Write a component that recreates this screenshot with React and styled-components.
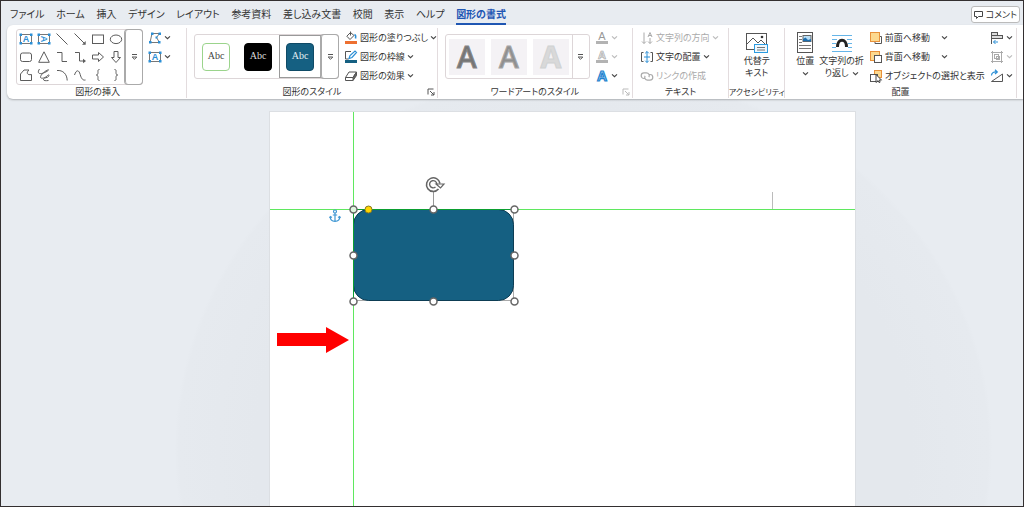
import styled, { createGlobalStyle } from "styled-components";

const tabs = [
  "ファイル",
  "ホーム",
  "挿入",
  "デザイン",
  "レイアウト",
  "参考資料",
  "差し込み文書",
  "校閲",
  "表示",
  "ヘルプ",
  "図形の書式",
];
const activeTab = "図形の書式";

const TextBoxIcon = ({ vertical }) => (
  <svg width="14" height="14" viewBox="0 0 14 14" fill="none">
    <rect x="1.5" y="2.5" width="11" height="9" stroke="#777" />
    <g fill="#2b8fd6">
      <rect x="0.500" y="1.500" width="2.500" height="2.500" />
      <rect x="11" y="1.500" width="2.500" height="2.500" />
      <rect x="0.500" y="10" width="2.500" height="2.500" />
      <rect x="11" y="10" width="2.500" height="2.500" />
    </g>
    <text
      x="7"
      y="10"
      textAnchor="middle"
      fontFamily="Liberation Sans, sans-serif"
      fontSize="9"
      fontWeight="700"
      fill="#2b8fd6"
      transform={vertical ? "rotate(90 7 7)" : undefined}
    >
      A
    </text>
  </svg>
);

const ShapeIcon = ({ children }) => (
  <svg width="14" height="14" viewBox="0 0 14 14" fill="none" stroke="#5c5c5c">
    {children}
  </svg>
);

const shapes = [
  { name: "テキスト ボックス", icon: <TextBoxIcon /> },
  { name: "縦書きテキスト ボックス", icon: <TextBoxIcon vertical /> },
  { name: "線", icon: <ShapeIcon><path d="M1.5 1.5 12.5 12.5" /></ShapeIcon> },
  {
    name: "線矢印",
    icon: (
      <ShapeIcon>
        <path d="M1.5 1.5 12 12" />
        <path d="M12.7 9v3.7H9z" fill="#5c5c5c" stroke="none" />
      </ShapeIcon>
    ),
  },
  { name: "正方形/長方形", icon: <ShapeIcon><rect x="1.5" y="3" width="11" height="8.5" /></ShapeIcon> },
  { name: "楕円", icon: <ShapeIcon><ellipse cx="7" cy="7.3" rx="5.7" ry="4.3" /></ShapeIcon> },
  { name: "四角形: 角を丸くする", icon: <ShapeIcon><rect x="1.5" y="3" width="11" height="8.5" rx="2" /></ShapeIcon> },
  { name: "二等辺三角形", icon: <ShapeIcon><path d="M7 1.8 12.3 12.3H1.7z" /></ShapeIcon> },
  { name: "コネクタ: カギ線", icon: <ShapeIcon><path d="M2 2.5h5v9h5" /></ShapeIcon> },
  {
    name: "コネクタ: カギ線矢印",
    icon: (
      <ShapeIcon>
        <path d="M2 2.5h4.5v8.5H11" />
        <path d="M10 8.7 13 11l-3 2.3z" fill="#5c5c5c" stroke="none" />
      </ShapeIcon>
    ),
  },
  { name: "矢印: 右", icon: <ShapeIcon><path d="M1.5 5h6V2.5L12.5 7l-5 4.5V9h-6z" /></ShapeIcon> },
  { name: "矢印: 下", icon: <ShapeIcon><path d="M5 1.5v6H2.5L7 12.5l4.5-5H9v-6z" /></ShapeIcon> },
  {
    name: "フリーフォーム: 図形",
    icon: <ShapeIcon><path d="M5 2h5C7 4.500 8 7.500 12.500 6.500v6h-11V6z" /></ShapeIcon>,
  },
  {
    name: "フリーフォーム: フリーハンド",
    icon: (
      <ShapeIcon>
        <path d="M2.500 1C.5 4 1 6 4.500 5.500M4.500 5.500C7 5 11.500 3 11.500 1.800 9 2 3 7 3.500 9.500c1 1.500 4.500.5 6.500-1.500s2.500-1 1.500.5-4.500 1-5 2.500 1.500 2 5 1.500" />
      </ShapeIcon>
    ),
  },
  { name: "円弧", icon: <ShapeIcon><path d="M2 2.500C8 2 12 6 12.200 12.500" /></ShapeIcon> },
  { name: "曲線", icon: <ShapeIcon><path d="M1.500 7C3.500 1 6 2 7.200 6.500s2.800 6 5.300 5.500" /></ShapeIcon> },
  { name: "左中かっこ", icon: <ShapeIcon><path d="M8.500 1.500C6.500 1.500 7 3 7 4.500S6.500 7 5.300 7C6.500 7 7 8 7 9.500s-.5 3 1.500 3" /></ShapeIcon> },
  { name: "右中かっこ", icon: <ShapeIcon><path d="M5.500 1.500C7.500 1.500 7 3 7 4.500S7.500 7 8.700 7C7.500 7 7 8 7 9.500s.5 3-1.500 3" /></ShapeIcon> },
];

const shapeStyles = [
  { name: "枠線のみ", fill: "#fff", line: "#9bd48c", ink: "#444" },
  { name: "塗りつぶし - 黒", fill: "#000", line: "#000", ink: "#ddd" },
  { name: "塗りつぶし - 青緑", fill: "#156082", line: "#0f4a66", ink: "#e4eef3", selected: true },
];

const wordArtStyles = [
  { name: "塗りつぶし - 濃い灰色", ink: "#757575", edge: "#858585" },
  { name: "塗りつぶし - 灰色", ink: "#8f8f8f", edge: "#a5a5a5" },
  { name: "塗りつぶし - 薄い灰色", ink: "#d9d9d9", edge: "#d0d2d3", weight: 700 },
];

const Chevron = ({ muted }) => (
  <svg width="7" height="7" viewBox="0 0 7 7" fill="none" stroke={muted ? "#bbb" : "#444"} strokeWidth="1.1">
    <path d="M1 2.300 3.500 4.700 6 2.300" />
  </svg>
);

const MoreIcon = () => (
  <svg width="7" height="8" viewBox="0 0 7 8" fill="none" stroke="#555">
    <path d="M1 1.500h5M1.200 4 3.500 6.300 5.800 4z" />
  </svg>
);

const LauncherIcon = ({ muted }) => (
  <svg width="8" height="8" viewBox="0 0 8 8" fill="none" stroke={muted ? "#bbb" : "#555"}>
    <path d="M1 6.500V1h5.500M3 3l4 4M7 4v3H4" />
  </svg>
);

const EditShapeIcon = () => (
  <svg width="14" height="14" viewBox="0 0 14 14" fill="none">
    <path d="M4 2.500h7.500L8.500 6.500 11.500 11.500H2z" stroke="#777" />
    <g fill="#2b8fd6">
      <rect x="3" y="1.500" width="2.500" height="2.500" />
      <rect x="10.500" y="1.500" width="2.500" height="2.500" />
      <rect x="7.500" y="5.500" width="2" height="2" />
      <rect x="1" y="10" width="2.500" height="2.500" />
      <rect x="10" y="10" width="2.500" height="2.500" />
    </g>
  </svg>
);

const FillIcon = () => (
  <svg width="14" height="14" viewBox="0 0 14 14" fill="none">
    <path d="M6.500 1.500 2.800 5.200 6 8.500l4-4zM6.500.5v4" stroke="#555" />
    <path d="M10.500 3.500c1.200.5 1.500 2 1 4" stroke="#2b8fd6" strokeWidth="1.500" />
    <rect x="1" y="10" width="12" height="3" fill="#ed7031" />
  </svg>
);

const OutlineIcon = () => (
  <svg width="14" height="14" viewBox="0 0 14 14" fill="none">
    <path d="M7 1.500H1.500v7.500h3" stroke="#555" />
    <path d="M5 8.500 6 5.500l5-4.500 1.500 1.500L8 7.500z" stroke="#2b8fd6" strokeWidth="1.200" />
    <rect x="1" y="10" width="12" height="3" fill="#156082" />
  </svg>
);

const EffectIcon = () => (
  <svg width="14" height="14" viewBox="0 0 14 14" fill="none">
    <path d="M1.500 8.500 5 3h7.500L9 8.500zM1.500 8.500v3H9" stroke="#555" strokeLinejoin="round" />
    <path d="M9 8.500 12.500 3v3.500L9 11.500z" fill="#666" stroke="#555" strokeLinejoin="round" />
  </svg>
);

const LetterIcon = ({ tone }) => {
  const blue = tone === "effect";
  return (
    <svg width="14" height="14" viewBox="0 0 14 14">
      <text
        x="7"
        y={blue ? 12 : 9}
        textAnchor="middle"
        fontFamily="Liberation Sans, sans-serif"
        fontSize={blue ? 14 : 11}
        fontWeight={tone === "fill" ? 400 : 700}
        fill={blue ? "#a9d4f2" : tone === "fill" ? "#999" : "#eee"}
        stroke={blue ? "#1f83cf" : tone === "fill" ? "none" : "#aaa"}
        strokeWidth={blue ? 1.2 : 0.7}
      >
        A
      </text>
      {!blue && <rect x="1" y="10" width="12" height="3" fill="#b3b3b3" />}
    </svg>
  );
};

const DirectionIcon = () => (
  <svg width="14" height="14" viewBox="0 0 14 14" fill="none" stroke="#aaa">
    <path d="M4 1.500v11M2 10.500l2 2 2-2" />
    <path d="M10 7v5.500M8 10.500l2 2 2-2" />
    <path d="M8 6l2-4.500L12 6M8.700 4.500h2.600" />
  </svg>
);

const AlignTextIcon = () => (
  <svg width="14" height="14" viewBox="0 0 14 14" fill="none">
    <path d="M3.500 2.500H1.500v9h2M10.500 2.500h2v9h-2" stroke="#555" />
    <path d="M7 1.500v11M5.200 3.300 7 1.500l1.800 1.800M5.200 10.700 7 12.500l1.800-1.800M4 7h6" stroke="#2b8fd6" />
  </svg>
);

const LinkIcon = () => (
  <svg width="14" height="14" viewBox="0 0 14 14" fill="none" stroke="#aaa" strokeWidth="1.200">
    <path d="M5 9.500H4a2.800 2.800 0 0 1 0-5.600h2.500a2.800 2.800 0 0 1 2.400 4.200" />
    <path d="M9 5.500h1a2.800 2.800 0 0 1 0 5.600H7.500a2.800 2.800 0 0 1-2.400-4.200" />
  </svg>
);

const AltTextIcon = () => (
  <svg width="24" height="22" viewBox="0 0 24 22" fill="none">
    <rect x="1.500" y="1.500" width="20" height="16" stroke="#555" />
    <path d="M2 12 8 6l5 5 3-3 5 5" stroke="#555" />
    <circle cx="17" cy="5" r="1.300" fill="#333" />
    <rect x="9.500" y="12.500" width="13" height="8" fill="#eef7fd" stroke="#2b9be0" />
    <path d="M12 15.500h8M12 18h8" stroke="#777" />
  </svg>
);

const PositionIcon = () => (
  <svg width="18" height="22" viewBox="0 0 18 22" fill="none">
    <rect x="1.500" y="0.500" width="15" height="20" stroke="#555" />
    <path d="M3 4.500h3M3 7.500h3M3 10.500h3M3 13.500h12M3 16.500h12" stroke="#777" />
    <rect x="7" y="3.500" width="8" height="6" fill="#b9def5" stroke="#666" />
    <path d="M7 9V7l2.500-1.500L12 8l3-1v2.500z" fill="#1c6fb0" />
  </svg>
);

const WrapIcon = () => (
  <svg width="22" height="22" viewBox="0 0 22 22" fill="none">
    <path
      d="M1 3.500h20M1 7.500h5M16 7.500h5M1 11.500h4M17 11.500h4M1 15.500h4M17 15.500h4M1 19.500h20"
      stroke="#66b5e8"
    />
    <path d="M6.500 15C6.500 6 15.500 6 15.500 15" stroke="#222" strokeWidth="3" />
  </svg>
);

const ForwardIcon = () => (
  <svg width="14" height="14" viewBox="0 0 14 14" fill="none">
    <path d="M11 5.500h1.500v7H6v-2" stroke="#555" />
    <rect x="1.500" y="1.500" width="9" height="9" fill="#fcd98f" stroke="#e8913a" />
  </svg>
);

const BackwardIcon = () => (
  <svg width="14" height="14" viewBox="0 0 14 14" fill="none">
    <rect x="1.500" y="1.500" width="9" height="9" fill="#fcd98f" stroke="#e8913a" />
    <rect x="5.500" y="5.500" width="7" height="7" fill="#fff" stroke="#555" />
  </svg>
);

const SelectionIcon = () => (
  <svg width="14" height="14" viewBox="0 0 14 14" fill="none">
    <rect x="5.500" y="1.500" width="7" height="7" fill="#fcd98f" stroke="#e8913a" />
    <rect x="1.500" y="5.500" width="7" height="7" fill="#fff" stroke="#555" />
    <path d="M7 5.500v8l2-1.800 1.200 2 1-.6-1.200-2H12.500z" fill="#fff" stroke="#333" strokeWidth=".9" />
  </svg>
);

const AlignIcon = () => (
  <svg width="14" height="14" viewBox="0 0 14 14" fill="none">
    <path d="M1.500 1v12" stroke="#555" />
    <rect x="1.500" y="1.500" width="6" height="3" fill="#ddd" stroke="#555" />
    <rect x="1.500" y="4.500" width="11" height="3" fill="#ddd" stroke="#555" />
    <path d="M3.500 11H8M5.500 9l-2 2 2 2" stroke="#2b8fd6" />
  </svg>
);

const GroupIcon = () => (
  <svg width="14" height="14" viewBox="0 0 14 14" fill="none" stroke="#aaa">
    <path d="M1 2.500h12M1 11.500h12M2.500 1v12M11.500 1v12" />
    <rect x="4.500" y="4.500" width="4" height="4" />
    <rect x="6.500" y="6.500" width="3" height="3" />
  </svg>
);

const RotateIcon = () => (
  <svg width="14" height="14" viewBox="0 0 14 14" fill="none">
    <path d="M1.500 6.500c0-3 2.500-4 5.500-3.500M5 .8 7.300 3 5 5" stroke="#2b8fd6" strokeWidth="1.200" />
    <path d="M12.500 5v7.500h-11z" stroke="#555" />
  </svg>
);

const CommentIcon = () => (
  <svg width="9" height="9" viewBox="0 0 9 9" fill="none" stroke="#444">
    <path d="M.5 1.500h8v5H4.500L2.500 8.500v-2h-2z" />
  </svg>
);

const ToolItem = ({ icon, label, title, muted, arrow = true }) => (
  <ToolButton type="button" disabled={muted} aria-label={title}>
    {icon}
    {label && <span>{label}</span>}
    {arrow && <Chevron muted={muted} />}
  </ToolButton>
);

const SelectedShape = () => {
  const handles = [
    [100, 20],
    [181, 20],
    [20, 66],
    [181, 66],
    [20, 112],
    [100, 112],
    [181, 112],
  ];
  return (
    <ShapeDrawing width="200" height="140" viewBox="0 -14 200 140" fill="none">
      <path d="M100.500 2v18" stroke="#999" />
      <rect x="20.500" y="20.500" width="160" height="91" fill="#fff" stroke="#aaa" />
      <rect x="20.500" y="20.500" width="160" height="91" rx="15" fill="#156082" stroke="#0d3d54" />
      <path d="M20.500 112V20.500H181" stroke="#0b9e30" />
      <circle cx="20.500" cy="20.500" r="3.500" fill="#dff5df" stroke="#666" strokeWidth="1.500" />
      {handles.map(([x, y]) => (
        <circle key={`${x}-${y}`} cx={x + 0.5} cy={y + 0.5} r="3.500" fill="#fff" stroke="#666" strokeWidth="1.500" />
      ))}
      <circle cx="35.500" cy="20.500" r="3.500" fill="#ffd500" stroke="#8a7a20" />
      <g stroke="#666">
        <path d="M107 -5.500a6.800 6.800 0 1 0-1.500 5.500" strokeWidth="1.600" />
        <path d="M103.800 -5a3.600 3.600 0 1 0-1.300 3" strokeWidth="1.400" />
        <path d="M103 -5h8l-3.500 4z" fill="#fff" strokeWidth="1.200" />
      </g>
    </ShapeDrawing>
  );
};

const App = () => (
  <>
    <GlobalStyle />
    <Window>
      <TitleRow>
        <TabList>
          {tabs.map((tab) => (
            <Tab key={tab} type="button" $active={tab === activeTab}>
              {tab}
            </Tab>
          ))}
        </TabList>
        <CommentButton type="button">
          <CommentIcon />
          コメント
        </CommentButton>
      </TitleRow>

      <Ribbon>
        <Group $grow={178}>
          <GroupBody>
            <Gallery>
              <ShapeGrid>
                {shapes.map(({ name, icon }) => (
                  <ShapeCell key={name} type="button" aria-label={name}>
                    {icon}
                  </ShapeCell>
                ))}
              </ShapeGrid>
              <MoreButton type="button" aria-label="その他" $framed>
                <MoreIcon />
              </MoreButton>
            </Gallery>
            <ToolColumn>
              <ToolItem icon={<EditShapeIcon />} title="図形の編集" />
              <ToolItem icon={<TextBoxIcon />} title="テキスト ボックス" />
            </ToolColumn>
          </GroupBody>
          <GroupLabel>図形の挿入</GroupLabel>
        </Group>

        <Group $grow={251}>
          <GroupBody>
            <Gallery>
              {shapeStyles.map(({ name, fill, line, ink, selected }) => (
                <StyleCell key={name} type="button" aria-label={name} $selected={selected}>
                  <StyleSwatch $fill={fill} $line={line} $ink={ink}>
                    Abc
                  </StyleSwatch>
                </StyleCell>
              ))}
              <MoreButton type="button" aria-label="その他" $framed>
                <MoreIcon />
              </MoreButton>
            </Gallery>
            <ToolColumn>
              <ToolItem icon={<FillIcon />} label="図形の塗りつぶし" />
              <ToolItem icon={<OutlineIcon />} label="図形の枠線" />
              <ToolItem icon={<EffectIcon />} label="図形の効果" />
            </ToolColumn>
          </GroupBody>
          <GroupLabel>図形のスタイル</GroupLabel>
          <Launcher type="button" aria-label="図形の書式設定">
            <LauncherIcon />
          </Launcher>
        </Group>

        <Group $grow={195}>
          <GroupBody>
            <Gallery>
              {wordArtStyles.map(({ name, ink, edge, weight }) => (
                <StyleCell key={name} type="button" aria-label={name}>
                  <WordArtSwatch $ink={ink} $edge={edge} $weight={weight}>
                    A
                  </WordArtSwatch>
                </StyleCell>
              ))}
              <MoreButton type="button" aria-label="その他">
                <MoreIcon />
              </MoreButton>
            </Gallery>
            <ToolColumn>
              <ToolItem icon={<LetterIcon tone="fill" />} title="文字の塗りつぶし" muted />
              <ToolItem icon={<LetterIcon tone="outline" />} title="文字の輪郭" muted />
              <ToolItem icon={<LetterIcon tone="effect" />} title="文字の効果" />
            </ToolColumn>
          </GroupBody>
          <GroupLabel>ワードアートのスタイル</GroupLabel>
          <Launcher type="button" aria-label="文字の効果の設定" disabled>
            <LauncherIcon muted />
          </Launcher>
        </Group>

        <Group $grow={96}>
          <GroupBody>
            <ToolColumn>
              <ToolItem icon={<DirectionIcon />} label="文字列の方向" muted />
              <ToolItem icon={<AlignTextIcon />} label="文字の配置" />
              <ToolItem icon={<LinkIcon />} label="リンクの作成" muted arrow={false} />
            </ToolColumn>
          </GroupBody>
          <GroupLabel>テキスト</GroupLabel>
        </Group>

        <Group $grow={55}>
          <GroupBody $inset={0} $center>
            <LargeButton type="button">
              <AltTextIcon />
              <span>代替テ</span>
              <span>キスト</span>
            </LargeButton>
          </GroupBody>
          <GroupLabel $compact>アクセシビリティ</GroupLabel>
        </Group>

        <Group $grow={232}>
          <GroupBody $inset={11}>
            <LargeButton type="button">
              <PositionIcon />
              <span>位置</span>
              <span>
                <Chevron />
              </span>
            </LargeButton>
            <LargeButton type="button">
              <WrapIcon />
              <span>文字列の折</span>
              <span>
                り返し <Chevron />
              </span>
            </LargeButton>
            <ToolColumn $labelWidth={54}>
              <ToolItem icon={<ForwardIcon />} label="前面へ移動" />
              <ToolItem icon={<BackwardIcon />} label="背面へ移動" />
              <ToolItem icon={<SelectionIcon />} label="オブジェクトの選択と表示" arrow={false} />
            </ToolColumn>
            <ToolColumn $end>
              <ToolItem icon={<AlignIcon />} title="配置" />
              <ToolItem icon={<GroupIcon />} title="グループ化" muted />
              <ToolItem icon={<RotateIcon />} title="回転" />
            </ToolColumn>
          </GroupBody>
          <GroupLabel>配置</GroupLabel>
        </Group>
      </Ribbon>

      <Workspace>
        <Sheet>
          <MarginMark $side="left" />
          <MarginMark $side="right" />
          <Guide $direction="vertical" />
          <Guide $direction="horizontal" />
          <SelectedShape />
          <AnchorIcon width="12" height="14" viewBox="0 0 12 14" fill="none" stroke="#3f97d3" strokeWidth="1.200">
            <circle cx="6" cy="2.500" r="1.500" />
            <path d="M6 4v8.500M3.800 6h4.400M1.200 7.500c0 3 2 4.800 4.800 4.800s4.800-1.800 4.800-4.800M.5 9l.8-1.500L3 8.500M11.500 9l-.8-1.500L9 8.500" />
          </AnchorIcon>
          <RedArrow width="74" height="28" viewBox="0 0 74 28">
            <path d="M1 7h49V1l23 13-23 13v-7H1z" fill="#f00" />
          </RedArrow>
        </Sheet>
      </Workspace>
    </Window>
  </>
);

const GlobalStyle = createGlobalStyle`
  * {
    box-sizing: border-box;
  }
  body {
    margin: 0;
    font-family: "Noto Sans CJK JP", sans-serif;
    font-size: 9px;
    font-feature-settings: "palt";
    color: #333;
  }
  button {
    margin: 0;
    padding: 0;
    border: 0;
    background: none;
    color: inherit;
    font: inherit;
    font-feature-settings: inherit;
  }
  svg {
    display: block;
    flex-shrink: 0;
  }
`;

const Window = styled.div`
  display: flex;
  flex-direction: column;
  min-height: 100vh;
  border: 1px solid #332f30;
  background: #e8ecf1;
  overflow: hidden;
`;

const TitleRow = styled.header`
  display: flex;
  align-items: flex-end;
  justify-content: space-between;
  height: 24px;
  padding: 0 3px 0 9px;
`;

const TabList = styled.nav`
  display: flex;
  justify-content: space-between;
  flex: 0 1 496px;
`;

const Tab = styled.button`
  padding-bottom: 2px;
  border-bottom: 2px solid ${({ $active }) => ($active ? "#1f57b4" : "transparent")};
  font-size: 10px;
  line-height: 14px;
  font-weight: ${({ $active }) => ($active ? 700 : 400)};
  color: ${({ $active }) => ($active ? "#1f57b4" : "#333")};
  white-space: nowrap;
`;

const CommentButton = styled.button`
  display: flex;
  align-items: center;
  gap: 3px;
  height: 17px;
  margin-bottom: 2px;
  padding: 0 2px;
  border: 1px solid #bbb;
  border-radius: 3px;
  background: #fff;
  white-space: nowrap;
`;

const Ribbon = styled.section`
  display: flex;
  margin-left: 6px;
  padding: 3px 6px 1px 2px;
  border-radius: 6px 0 0 6px;
  background: #fff;
  box-shadow: 0 1px 2px rgba(0, 0, 0, 0.25);
  z-index: 1;
`;

const Group = styled.div`
  position: relative;
  display: flex;
  flex-direction: column;
  flex: ${({ $grow }) => $grow} 1 0;
  min-width: 0;
  border-right: 1px solid #e3dcde;
`;

const GroupBody = styled.div`
  display: flex;
  align-items: center;
  justify-content: ${({ $center }) => ($center ? "center" : "flex-start")};
  gap: 5px;
  height: 57px;
  padding-left: ${({ $inset = 7 }) => $inset}px;
`;

const GroupLabel = styled.div`
  align-self: center;
  font-size: ${({ $compact }) => ($compact ? 8 : 9)}px;
  line-height: 13px;
  white-space: nowrap;
`;

const Launcher = styled.button`
  position: absolute;
  right: 2px;
  bottom: 2px;
`;

const Gallery = styled.div`
  display: flex;
  flex-shrink: 0;
  border: 1px solid #ddd6d8;
  border-radius: 3px;
`;

const ShapeGrid = styled.div`
  display: grid;
  grid-template-columns: repeat(6, 18px);
  grid-auto-rows: 18px;
`;

const ShapeCell = styled.button`
  display: grid;
  place-items: center;
`;

const StyleCell = styled.button`
  display: grid;
  place-items: center;
  width: 42px;
  height: 43px;
  border: 1px solid ${({ $selected }) => ($selected ? "#999" : "transparent")};
`;

const StyleSwatch = styled.span`
  width: 28px;
  height: 28px;
  border: 1px solid ${({ $line }) => $line};
  border-radius: 4px;
  background: ${({ $fill }) => $fill};
  color: ${({ $ink }) => $ink};
  font-family: "Liberation Serif", serif;
  font-size: 10px;
  line-height: 24px;
`;

const WordArtSwatch = styled.span`
  width: 36px;
  height: 36px;
  background: #f4f2f5;
  color: ${({ $ink }) => $ink};
  font-family: "Noto Sans", sans-serif;
  font-size: 30px;
  font-weight: ${({ $weight = 500 }) => $weight};
  line-height: 36px;
  -webkit-text-stroke: 1px ${({ $edge }) => $edge};
`;

const MoreButton = styled.button`
  display: grid;
  place-items: center;
  width: 17px;
  border-left: 1px solid ${({ $framed }) => ($framed ? "#aaa" : "#ddd6d8")};
  border-radius: ${({ $framed }) => ($framed ? "3px" : "0")};
  box-shadow: ${({ $framed }) => ($framed ? "0 0 0 1px #aaa" : "none")};
`;

const ToolColumn = styled.div`
  display: flex;
  flex-direction: column;
  align-self: flex-start;
  margin-left: ${({ $end }) => ($end ? "auto" : 0)};
  padding-right: ${({ $end }) => ($end ? 8 : 0)}px;

  span {
    min-width: ${({ $labelWidth = 0 }) => $labelWidth}px;
    text-align: left;
  }
`;

const ToolButton = styled.button`
  display: flex;
  align-items: center;
  gap: 2px;
  height: 19px;
  color: ${({ disabled }) => (disabled ? "#aaa" : "#333")};
  white-space: nowrap;
`;

const LargeButton = styled.button`
  display: flex;
  flex-direction: column;
  align-items: center;
  align-self: flex-start;
  padding-top: 4px;
  white-space: nowrap;

  > svg {
    margin-bottom: 1px;
  }

  span {
    display: flex;
    align-items: center;
    gap: 3px;
    height: 12px;
    line-height: 12px;
  }
`;

const Workspace = styled.main`
  display: grid;
  grid-template-columns: 268fr 587fr 167fr;
  flex: 1;
  padding-top: 12px;
  background: radial-gradient(ellipse 40% 93% at 57% 86%, #e4e8ed 80%, #e6eaef 99%, #e8ecf1 100%);
`;

const Sheet = styled.div`
  position: relative;
  grid-column: 2;
  border: 1px solid #dcdfe3;
  border-bottom: 0;
  background: #fff;
`;

const Guide = styled.div`
  position: absolute;
  background: #5fe85f;
  ${({ $direction }) =>
    $direction === "vertical" ? "left: 83px; top: 0; bottom: 0; width: 1px;" : "top: 97px; left: 0; right: 0; height: 1px;"}
`;

const MarginMark = styled.div`
  position: absolute;
  top: 80px;
  width: 18px;
  height: 18px;
  border-bottom: 1px solid #aaa;
  ${({ $side }) =>
    $side === "left" ? "left: 66px; border-right: 1px solid #aaa;" : "right: 65px; border-left: 1px solid #bbb;"}
`;

const ShapeDrawing = styled.svg`
  position: absolute;
  left: 63px;
  top: 63px;
`;

const AnchorIcon = styled.svg`
  position: absolute;
  left: 59px;
  top: 97px;
`;

const RedArrow = styled.svg`
  position: absolute;
  left: 6px;
  top: 214px;
`;

export default App;
